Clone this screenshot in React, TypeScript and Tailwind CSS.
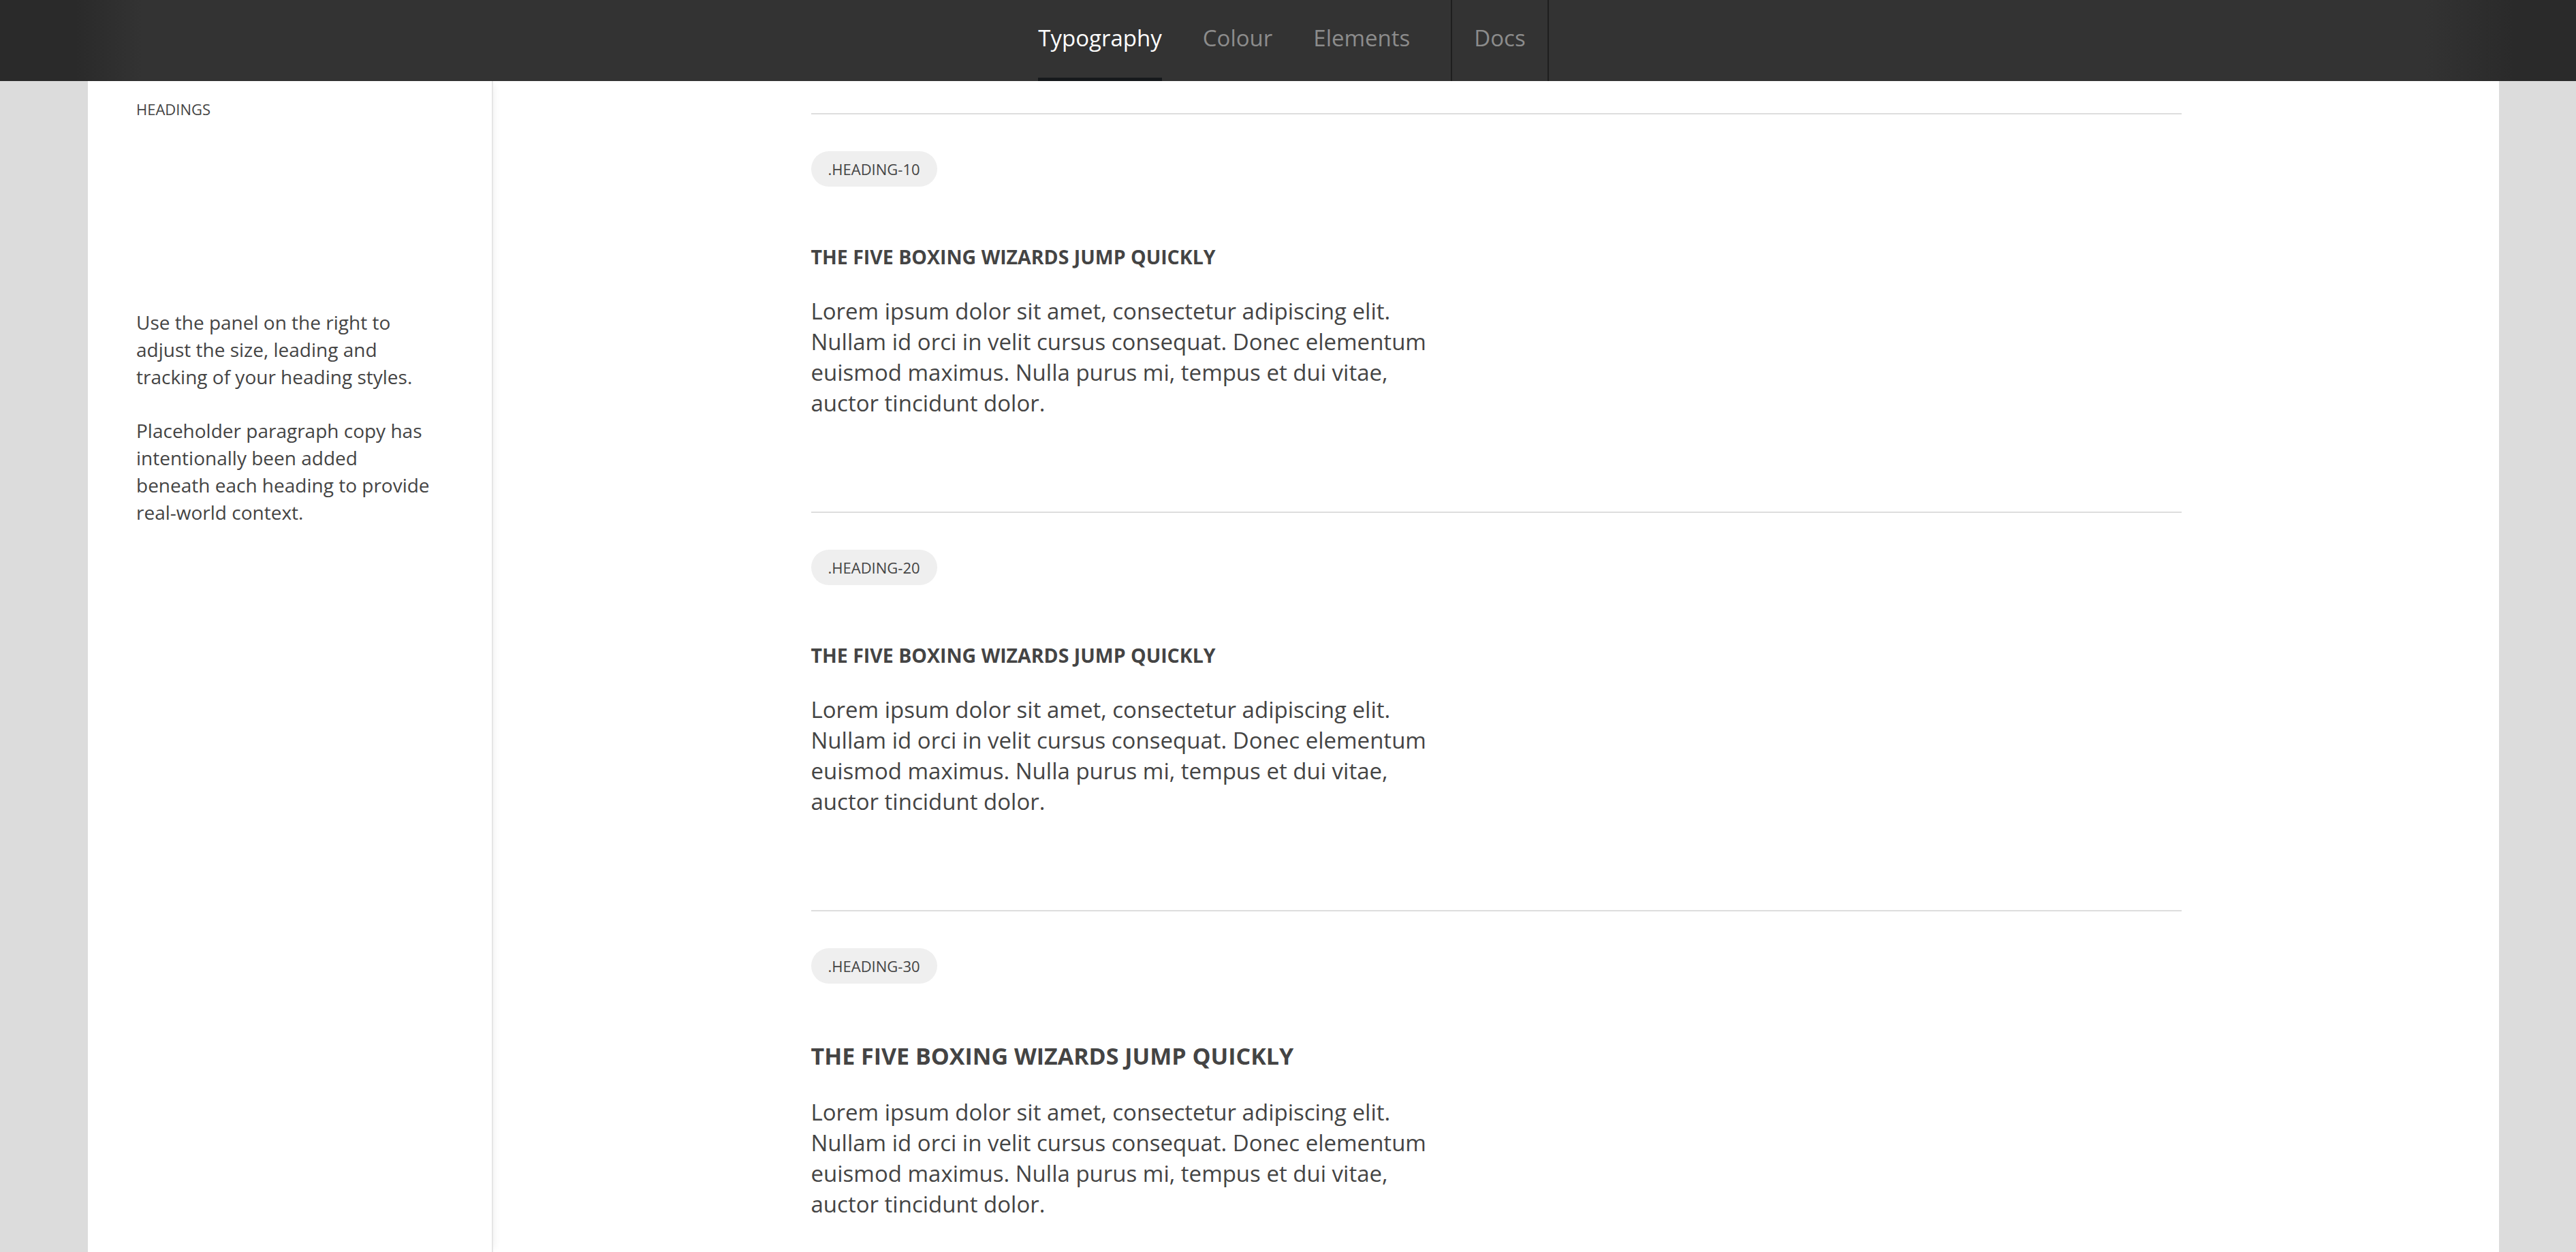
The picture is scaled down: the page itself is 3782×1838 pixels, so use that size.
const navItems = [
    { label: "Typography", active: true },
    { label: "Colour", active: false },
    { label: "Elements", active: false },
]

const sections = [
    { tag: ".HEADING-10", headingClass: "text-[28.5px] leading-[34px]" },
    { tag: ".HEADING-20", headingClass: "text-[28.5px] leading-[34px]" },
    { tag: ".HEADING-30", headingClass: "text-[34px] leading-[40px]" },
]

const Header = () => {
    return (
        <header className="h-[119px] w-full bg-[linear-gradient(to_right,#2a2a2a_0px,#2a2a2a_110px,#333333_210px,#333333_3560px,#2a2a2a_3690px,#2a2a2a_100%)]">
            <div className="ml-[129px] w-[3540px] h-full flex justify-center">
                <nav className="h-full flex items-stretch">
                    {navItems.map((item) => (
                        <div key={item.label} className="mr-[60px] h-full flex flex-col justify-end">
                            <div
                                className={
                                    item.active
                                        ? "pb-[38px] text-[33px] leading-[40px] text-white"
                                        : "pb-[38px] text-[33px] leading-[40px] text-[#8c8c8c]"
                                }
                            >
                                {item.label}
                            </div>
                            <div className={item.active ? "h-[5px] bg-[#16191c]" : "h-[5px]"} />
                        </div>
                    ))}
                    <div className="h-full px-[32px] border-x-2 border-[#1e1e1e] flex flex-col justify-end">
                        <div className="pb-[43px] text-[33px] leading-[40px] text-[#8c8c8c]">Docs</div>
                    </div>
                </nav>
            </div>
        </header>
    )
}

const Sidebar = () => {
    return (
        <aside className="w-[595px] shrink-0 border-r-2 border-[#e5e5e5] shadow-[8px_0_10px_-6px_rgba(0,0,0,0.06)] px-[71px] pt-[26px] text-[#444444]">
            <div className="text-[22px] leading-[30px] uppercase">Headings</div>
            <p className="mt-[278px] text-[28px] leading-[40px]">
                Use the panel on the right to adjust the size, leading and tracking of your heading styles.
            </p>
            <p className="mt-[39px] text-[28px] leading-[40px]">
                Placeholder paragraph copy has intentionally been added
                <br />
                beneath each heading to provide real-world context.
            </p>
        </aside>
    )
}

const Section = ({ tag, headingClass }: { tag: string; headingClass: string }) => {
    return (
        <section className="border-t-2 border-[#dddddd] pt-[54px] pb-[137px]">
            <span className="inline-flex h-[52px] items-center rounded-full bg-[#efefef] px-[25px] text-[22px] text-[#444444]">
                {tag}
            </span>
            <h2 className={"mt-[86px] font-bold uppercase text-[#444444] " + headingClass}>
                The five boxing wizards jump quickly
            </h2>
            <p className="mt-[40px] w-[945px] text-[33px] leading-[45px] text-[#444444]">
                Lorem ipsum dolor sit amet, consectetur adipiscing elit. Nullam id orci in velit cursus consequat. Donec
                elementum euismod maximus. Nulla purus mi, tempus et dui vitae, auctor tincidunt dolor.
            </p>
        </section>
    )
}

export default function App() {
    return (
        <div className="h-[1838px] overflow-hidden bg-[#dcdcdc] font-['Open_Sans',sans-serif]">
            <Header />
            <div className="ml-[129px] w-[3540px] h-[1719px] bg-white flex">
                <Sidebar />
                <main className="flex-1 pt-[47px]">
                    <div className="mx-auto w-[2012px]">
                        {sections.map((s) => (
                            <Section key={s.tag} tag={s.tag} headingClass={s.headingClass} />
                        ))}
                    </div>
                </main>
            </div>
        </div>
    )
}
